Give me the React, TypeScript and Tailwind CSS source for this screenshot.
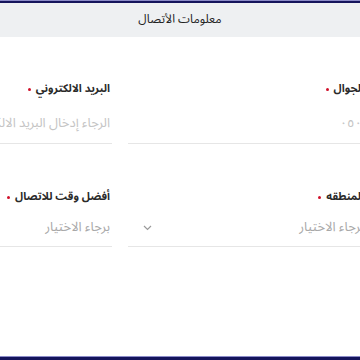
import React from "react";

const font = { fontFamily: '"Noto Sans Arabic", "DejaVu Sans", sans-serif' };

function Label({ text }: { text: string }) {
  return (
    <div className="flex h-4 items-center gap-[5px] pr-[2px] text-[11px] font-bold leading-4 text-[#2a2a2a]">
      <span>{text}</span>
      <span className="h-[3px] w-[3px] rounded-full bg-[#d0102a]" />
    </div>
  );
}

function Chevron() {
  return (
    <svg width="9" height="6" viewBox="0 0 9 6" fill="none">
      <path d="M1 1l3.5 3.5L8 1" stroke="#9a9a9a" strokeWidth="1.2" />
    </svg>
  );
}

function TextField({ label, placeholder, shift = 0 }: { label: string; placeholder: string; shift?: number }) {
  return (
    <div className="w-[238px] shrink-0">
      <Label text={label} />
      <div className="flex h-[47px] items-center overflow-hidden whitespace-nowrap border-b border-[#e6e6e6] pr-[2px] pt-[7px] text-[13px] text-[#c4c4c4]">
        <span className="shrink-0" style={{ marginRight: -shift }}>
          {placeholder}
        </span>
      </div>
    </div>
  );
}

function SelectField({ label, placeholder }: { label: string; placeholder: string }) {
  return (
    <div className="w-[238px] shrink-0">
      <Label text={label} />
      <div className="flex h-[42px] items-center justify-between whitespace-nowrap border-b border-[#e6e6e6] pr-[2px] pl-[15px] pt-[4px] text-[13px] text-[#a8a8a8]">
        <span>{placeholder}</span>
        <Chevron />
      </div>
    </div>
  );
}

export default function App() {
  return (
    <div className="flex h-[360px] w-[360px] flex-col overflow-hidden bg-white" style={font}>
      <div className="h-px bg-[#8c8cc8]" />
      <div className="h-[2px] bg-[#15155c]" />
      <div className="flex h-[34px] items-center justify-center bg-[#eef0f2] text-[12px] text-[#222]">
        <span dir="rtl">معلومات الأتصال</span>
      </div>
      <div className="flex-1">
        <div dir="rtl" className="mr-[-6px] ml-[-126px] flex flex-col">
          <div className="mt-[44px] flex gap-4">
            <TextField label="الجوال" placeholder="٠٥٠٠٠٠٠٠٠٠" shift={50} />
            <TextField label="البريد الالكتروني" placeholder="الرجاء إدخال البريد الالكتروني" />
          </div>
          <div className="mt-[45px] flex gap-4">
            <SelectField label="المنطقه" placeholder="برجاء الاختيار" />
            <SelectField label="أفضل وقت للاتصال" placeholder="برجاء الاختيار" />
          </div>
        </div>
      </div>
      <div className="h-px bg-[#8c8cc8]" />
      <div className="h-[3px] bg-[#15155c]" />
    </div>
  );
}
